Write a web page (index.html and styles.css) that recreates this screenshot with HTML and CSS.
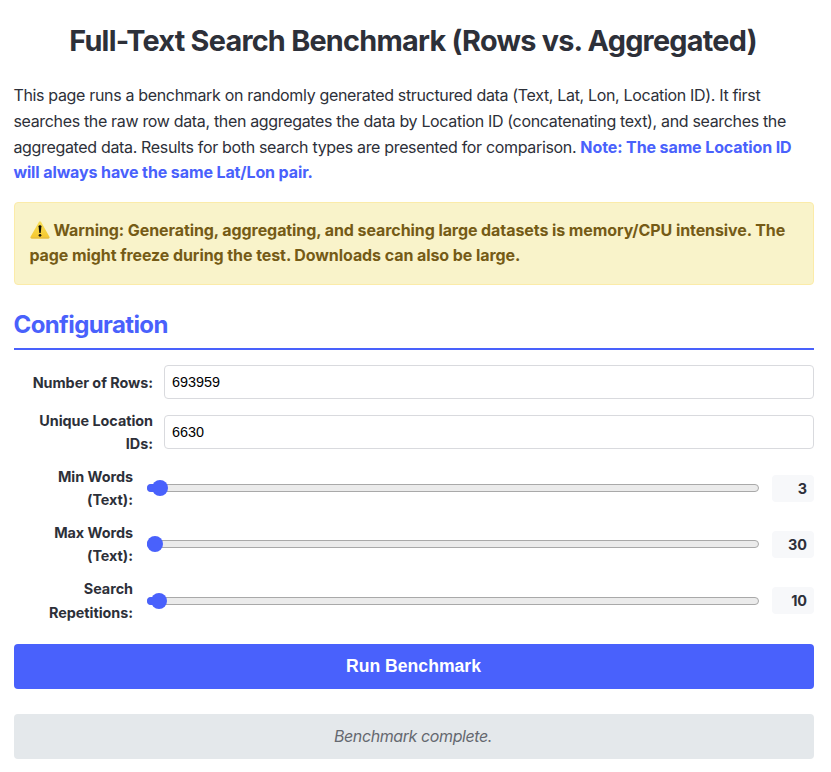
FILE: index.html
```html
<!DOCTYPE html>
<html lang="en">
<head>
<meta charset="utf-8">
<title>Full-Text Search Benchmark</title>
<link rel="stylesheet" href="styles.css">
</head>
<body>
<main class="page">
  <h1>Full-Text Search Benchmark (Rows vs. Aggregated)</h1>
  <p class="intro">This page runs a benchmark on randomly generated structured data (Text, Lat, Lon, Location ID). It first<br>searches the raw row data, then aggregates the data by Location ID (concatenating text), and searches the<br>aggregated data. Results for both search types are presented for comparison. <strong>Note: The same Location ID<br>will always have the same Lat/Lon pair.</strong></p>
  <div class="warning"><svg class="warn-icon" viewBox="0 0 20 18" aria-hidden="true"><defs><linearGradient id="sun" x1="0" y1="0" x2="0" y2="1"><stop offset="0" stop-color="#f8df58"/><stop offset="1" stop-color="#f5c72c"/></linearGradient></defs><path d="M8.9 1.1Q10 -.6 11.1 1.1L19.3 15.4Q20.2 17.3 18.3 17.5H1.7Q-.2 17.3.7 15.4Z" fill="url(#sun)"/><path d="M.7 16.3Q.9 17.5 2 17.5H18Q19.1 17.5 19.3 16.3Z" fill="#e5bd45"/><path d="M8.6 5.2Q8.6 4.2 10 4.2T11.4 5.2L10.8 11.4Q10.7 12.1 10 12.1T9.2 11.4Z" fill="#151207"/><circle cx="10" cy="14.3" r="1.35" fill="#151207"/></svg>Warning: Generating, aggregating, and searching large datasets is memory/CPU intensive. The<br>page might freeze during the test. Downloads can also be large.</div>
  <h2>Configuration</h2>
  <form class="config">
    <div class="field"><label for="rows">Number of Rows:</label><input id="rows" type="text" value="693959"></div>
    <div class="field"><label for="ids">Unique Location<br>IDs:</label><input id="ids" type="text" value="6630"></div>
    <div class="slider"><span class="name">Min Words<br>(Text):</span><div class="track"><i class="fill" style="width:13px"></i></div><output>3</output></div>
    <div class="slider"><span class="name">Max Words<br>(Text):</span><div class="track"><i class="fill" style="width:8px"></i></div><output>30</output></div>
    <div class="slider last"><span class="name">Search<br>Repetitions:</span><div class="track"><i class="fill" style="width:12px"></i></div><output>10</output></div>
    <button type="button">Run Benchmark</button>
  </form>
  <div class="status">Benchmark complete.</div>
</main>
</body>
</html>
```
FILE: styles.css
```css
* { box-sizing: border-box; }
body {
  margin: 0;
  background: #fff;
  color: #2d3039;
  font: 16px/25.6px Inter, "Liberation Sans", sans-serif;
}
.page { width: 800px; margin-left: 14px; }
h1 {
  margin: 0;
  padding-top: 18px;
  width: 798px;
  font-size: 28.8px;
  line-height: 46px;
  text-align: center;
  white-space: nowrap;
  letter-spacing: -0.74px;
}
.intro { margin: 19.35px 0 16.65px -0.6px; white-space: nowrap; letter-spacing: -0.335px; }
.intro strong { color: #4961fc; letter-spacing: -0.11px; }
.warning {
  height: 83px;
  padding: 15px 14.4px;
  border: 1px solid #fbeba9;
  border-radius: 4px;
  background: #f9f3ca;
  color: #755b16;
  font-weight: 700;
  line-height: 25px;
  white-space: nowrap;
  letter-spacing: -0.08px;
}
.warn-icon { width: 20px; height: 18px; margin-right: 3px; vertical-align: -3px; margin-left: 1px; }
h2 {
  margin: 20px 0 15px -0.5px;
  height: 45px;
  border-bottom: 2px solid #4961fc;
  color: #4961fc;
  font-size: 24px;
  line-height: 39px;
  letter-spacing: -0.6px;
}
.config { display: flex; flex-direction: column; gap: 10px; margin: 0; }
.field, .slider {
  display: flex;
  align-items: center;
  font-size: 14.4px;
  font-weight: 700;
  line-height: 23px;
  text-align: right;
  letter-spacing: -0.04px;
}
.field label { width: 139px; margin-right: 11px; white-space: nowrap; }
.field input {
  flex: 1;
  height: 34px;
  padding: 0 7px;
  border: 1px solid #d9dade;
  border-radius: 4px;
  color: #000;
  font: 14.4px "Liberation Sans", Arial, sans-serif;
}
.slider { height: 46px; }
.name { width: 119px; margin-right: 14px; white-space: nowrap; }
.last .name { padding-top: 1px; line-height: 24px; }
.track {
  width: 612px;
  height: 8px;
  border: 1px solid #a9a9a9;
  border-radius: 4px;
  background: #ebebeb;
}
.last .track { margin-top: 2px; }
.fill {
  display: block;
  position: relative;
  height: 8px;
  margin: -1px;
  border-radius: 4px 0 0 4px;
  background: #4961fc;
}
.fill::after {
  content: "";
  position: absolute;
  top: -4px;
  right: -8px;
  width: 16px;
  height: 16px;
  border-radius: 50%;
  background: #4961fc;
}
.slider output {
  width: 42px;
  height: 27px;
  margin-left: 13px;
  padding-right: 7px;
  border-radius: 4px;
  background: #f7f8fa;
  line-height: 28px;
}
button {
  height: 45px;
  margin-top: 11px;
  padding: 0 1px 0 0;
  border: 0;
  border-radius: 4px;
  background: #4961fc;
  color: #fff;
  font: bold 17.6px "Liberation Sans", Arial, sans-serif;
}
.status {
  height: 45px;
  margin-top: 25px;
  padding-right: 2px;
  border-radius: 4px;
  background: #e4e8eb;
  color: #656970;
  font-style: italic;
  line-height: 45px;
  text-align: center;
  letter-spacing: -0.4px;
}
```
